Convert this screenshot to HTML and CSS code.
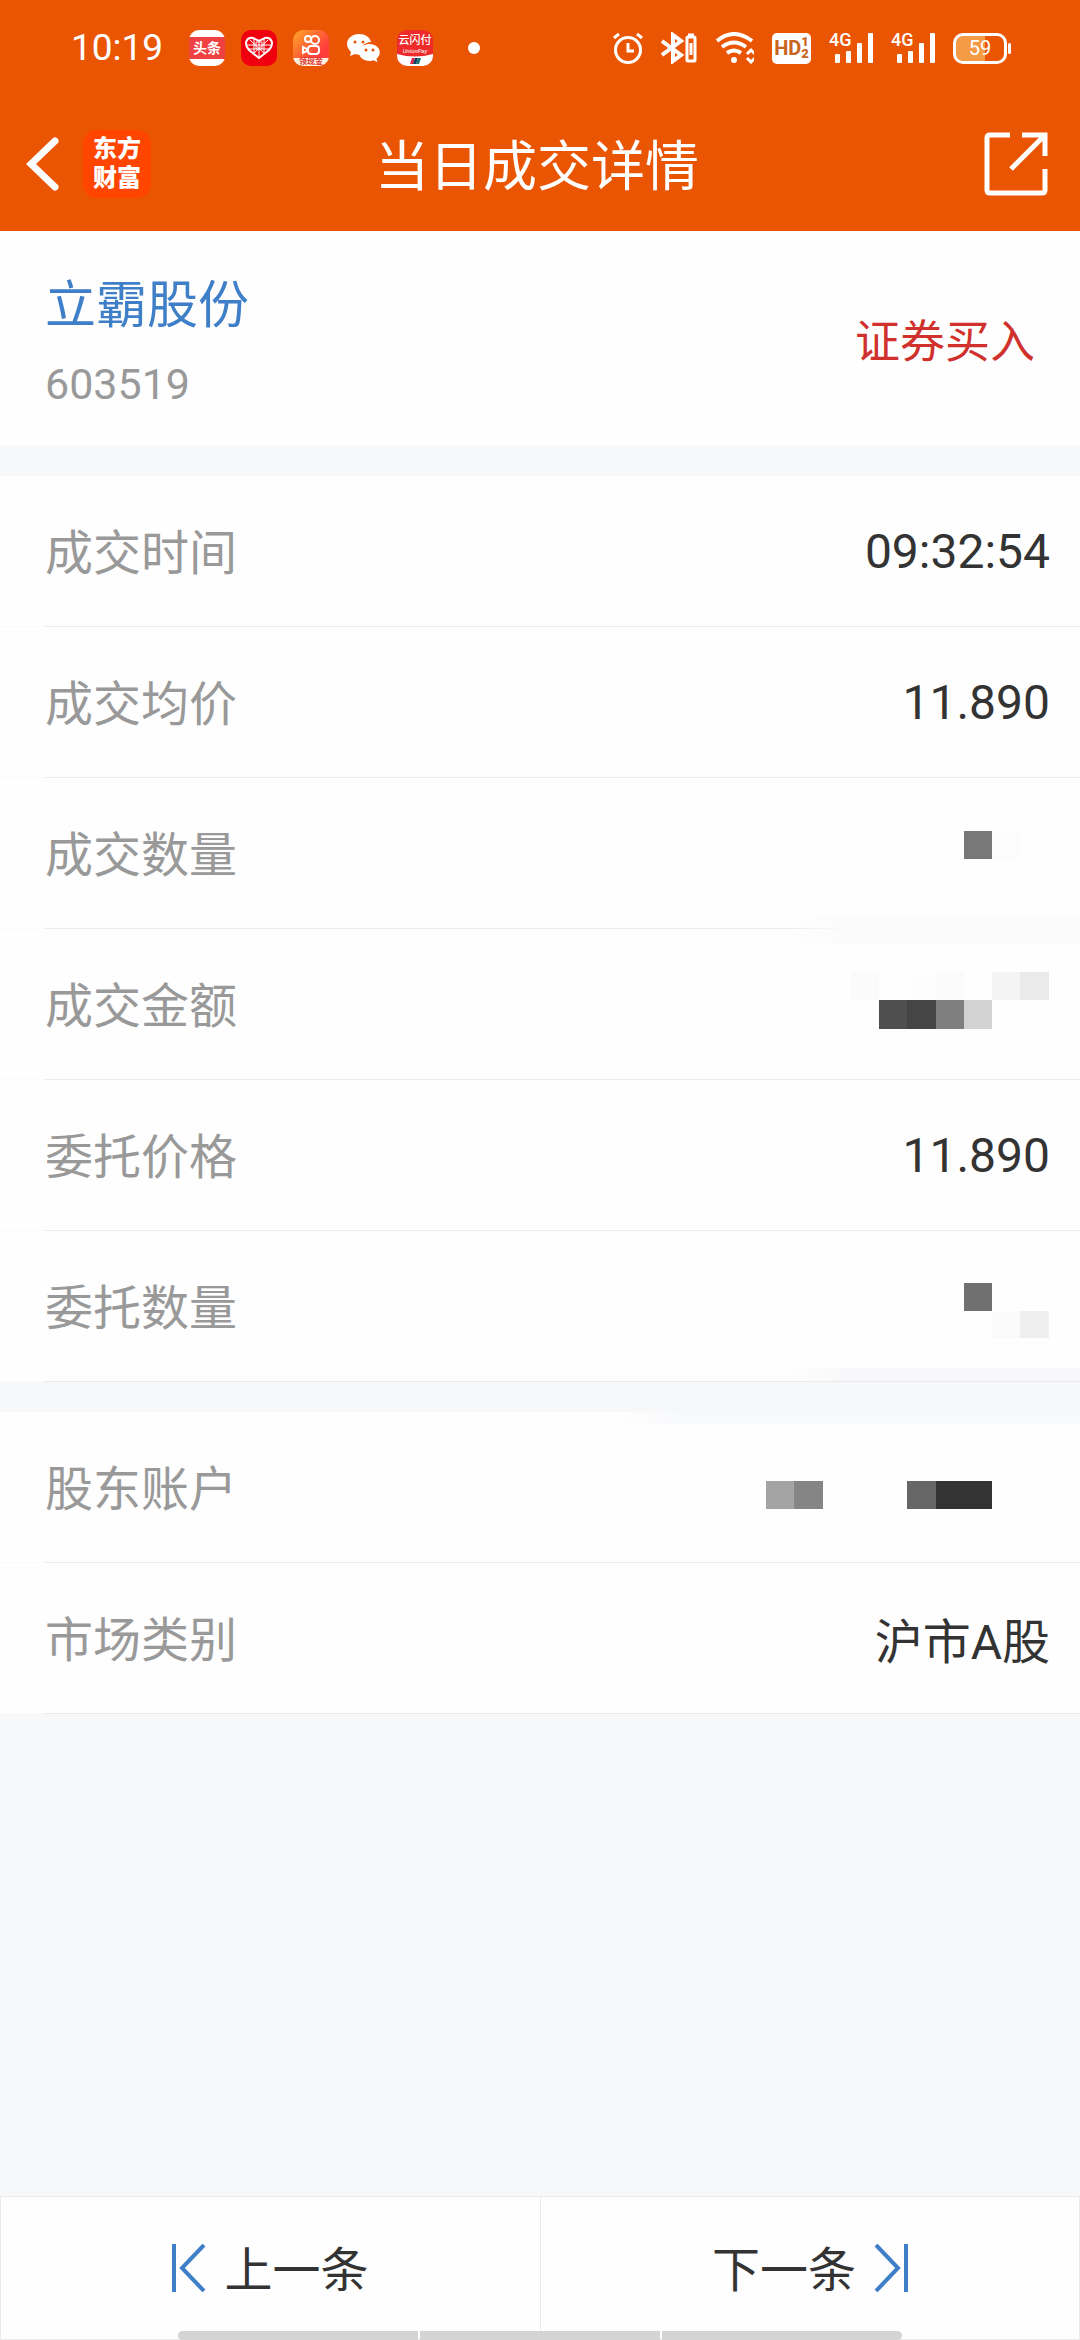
FILE: index.html
```html
<!DOCTYPE html>
<html lang="zh-CN">
<head>
<meta charset="utf-8">
<meta name="viewport" content="width=device-width, initial-scale=1">
<title>当日成交详情</title>
<link rel="stylesheet" href="styles.css">
</head>
<body>
<div class="app">
  <div class="status">
    <time class="clock">10:19</time>
    <div class="notices">
      <span class="chip chip-news"><b>头条</b></span>
      <span class="chip chip-heart">
        <svg width="36" height="36" viewBox="0 0 36 36" fill="none" stroke="#fff" stroke-width="2">
          <path d="M18 28 8 20C2 13 6 7 12 8l6 3 6-3c6-1 10 5 4 12z"/>
          <path d="M9 10l15 14M27 10 12 24M13 8v15M23 8v15M6 15h24M18 11v16M7 19h22M15 12h6v7h-6z" stroke-width="1"/>
        </svg>
      </span>
      <span class="chip chip-video">
        <svg width="36" height="28" viewBox="0 0 36 28" fill="none" stroke="#fff" stroke-width="2">
          <circle cx="15" cy="9" r="3"/><circle cx="22" cy="10" r="4"/>
          <rect x="15" y="16" width="11" height="8" rx="3"/><path d="M10 17v6l4-2v-2z"/>
        </svg>
        <b>领现金</b>
      </span>
      <svg width="36" height="36" viewBox="0 0 36 36">
        <path fill="#fff" d="M14 4C7 4 2 8.500 2 14c0 3 2 6 4 8l-1 4 5-2c2 .6 4 .8 6 .6C14 17 20 12 26 12 25 7 20 4 14 4z"/>
        <path fill="#fff" d="M24.500 14C18 14 14 18 14 22.500S18.500 31 24.500 31c1.500 0 3-.3 4-.7l4 1.700-1-3.500c2-1.500 3.300-3.600 3.300-6C34.800 18 30.500 14 24.500 14z"/>
        <g fill="#ea5504"><circle cx="10" cy="12" r="1.500"/><circle cx="18" cy="12" r="1.500"/><circle cx="21" cy="20" r="1.500"/><circle cx="28" cy="20" r="1.500"/></g>
      </svg>
      <span class="chip chip-pay">
        <b>云闪付</b><i>UnionPay</i>
        <svg width="36" height="12" viewBox="0 0 36 12"><path fill="#fff" d="M0 0q18 5 36 0v12H0z"/><path fill="#d7274b" d="M15 4h3l-2 6h-3z"/><path fill="#123a63" d="M18 4h3l-2 6h-3z"/><path fill="#14786f" d="M21 4h3l-2 6h-3z"/></svg>
      </span>
      <span class="dot"></span>
    </div>
    <div class="signals">
      <svg width="30" height="32" viewBox="0 0 30 32" fill="none" stroke="#fff" stroke-width="3">
        <circle cx="15" cy="18" r="12.500"/><path d="M15 11v8h6"/><path d="M1 6l5-4M24 2l5 4"/>
      </svg>
      <svg width="37" height="32" viewBox="0 0 37 32" fill="none" stroke="#fff">
        <path stroke-width="4" d="M1 9l19 14-8 6V3l8 6L1 23"/>
        <rect x="26" y="5" width="8" height="24" rx="1" stroke-width="3"/><path stroke-width="3" d="M27 3h6M30 11v12"/>
      </svg>
      <svg width="38" height="32" viewBox="0 0 38 32" fill="none" stroke="#fff" stroke-width="4">
        <path d="M1 9Q18-5 36 9M6 15q12-9 24 0M11 21q7-5 14 0"/><circle cx="18" cy="28" r="3" fill="#fff" stroke="none"/>
        <path stroke-width="3" d="M31 22l4-4 4 4M31 26l4 4 4-4"/>
      </svg>
      <span class="hd"><b>HD</b><span>1<br>2</span></span>
      <span class="cell"><span>4G</span>
        <svg width="44" height="32" viewBox="0 0 44 32" fill="#fff"><rect x="6" y="22" width="5" height="9" rx="1"/><rect x="17" y="19" width="5" height="12" rx="1"/><rect x="28" y="11" width="5" height="20" rx="1"/><rect x="39" y="1" width="5" height="30" rx="1"/></svg>
      </span>
      <span class="cell"><span>4G</span>
        <svg width="44" height="32" viewBox="0 0 44 32" fill="#fff"><rect x="6" y="22" width="5" height="9" rx="1"/><rect x="17" y="19" width="5" height="12" rx="1"/><rect x="28" y="11" width="5" height="20" rx="1"/><rect x="39" y="1" width="5" height="30" rx="1"/></svg>
      </span>
      <span class="battery">59</span>
    </div>
  </div>

  <header class="bar">
    <div class="bar-left">
      <button class="icon-btn" type="button" aria-label="返回">
        <svg width="34" height="58" viewBox="0 0 34 58" fill="none" stroke="#fff" stroke-width="7" stroke-linecap="round"><path d="M29 6 5 29l24 23"/></svg>
      </button>
      <span class="logo">东方<br>财富</span>
    </div>
    <h1 class="title">当日成交详情</h1>
    <button class="icon-btn share" type="button" aria-label="分享">
      <svg width="64" height="64" viewBox="0 0 64 64" fill="none" stroke="#fff" stroke-width="5">
        <path d="M26 3H6q-3 0-3 3v52q0 3 3 3h52q3 0 3-3V37"/><path d="M38 3h23v21M60 4 27 37"/>
      </svg>
    </button>
  </header>

  <main>
    <section class="card summary">
      <div class="stock">
        <a class="name" href="#stock">立霸股份</a>
        <div class="code">603519</div>
      </div>
      <div class="side">证券买入</div>
    </section>

    <dl class="card">
      <div class="row"><dt>成交时间</dt><dd>09:32:54</dd></div>
      <div class="row"><dt>成交均价</dt><dd>11.890</dd></div>
      <div class="row smudge-line"><dt>成交数量</dt><dd>
        <svg width="284" height="64"><path fill="#787878" d="M198 10h28v28h-28z"/><path fill="#fcfcfc" d="M226 10h28v28h-28z"/></svg></dd></div>
      <div class="row"><dt>成交金额</dt><dd>
        <svg width="284" height="64">
          <path fill="#fbfbfb" d="M85 0h28v28H85zM170 0h28v28h-28z"/><path fill="#fdfdfd" d="M141 0h29v28h-29z"/><path fill="#f4f4f4" d="M226 0h28v28h-28z"/><path fill="#eaeaea" d="M254 0h29v28h-29z"/>
          <path fill="#4f4f4f" d="M113 28h28v29h-28z"/><path fill="#454545" d="M141 28h29v29h-29z"/><path fill="#7f7f7f" d="M170 28h28v29h-28z"/><path fill="#d2d2d2" d="M198 28h28v29h-28z"/>
        </svg></dd></div>
      <div class="row"><dt>委托价格</dt><dd>11.890</dd></div>
      <div class="row smudge-end"><dt>委托数量</dt><dd>
        <svg width="284" height="64"><path fill="#707070" d="M198 9h28v28h-28z"/><path fill="#fbfbfb" d="M226 37h28v29h-28z"/><path fill="#efefef" d="M254 37h29v29h-29z"/></svg></dd></div>
    </dl>

    <dl class="card">
      <div class="row smudge-start"><dt>股东账户</dt><dd>
        <svg width="284" height="64"><path fill="#a4a4a4" d="M0 26h28v28H0z"/><path fill="#858585" d="M28 26h29v28H28z"/><path fill="#666" d="M141 26h29v28h-29z"/><path fill="#333" d="M170 26h56v28h-56z"/></svg></dd></div>
      <div class="row"><dt>市场类别</dt><dd>沪市A股</dd></div>
    </dl>
  </main>

  <nav class="pager">
    <button type="button">
      <svg width="34" height="48" viewBox="0 0 34 48" fill="none" stroke="#3f7fc8" stroke-width="4"><path d="M2 0v48M32 1 10 24l22 23"/></svg>
      <span>上一条</span>
    </button>
    <button type="button">
      <span>下一条</span>
      <svg width="34" height="48" viewBox="0 0 34 48" fill="none" stroke="#3f7fc8" stroke-width="4"><path d="M32 0v48M2 1l22 23L2 47"/></svg>
    </button>
  </nav>
  <div class="gesture"><span></span><span></span><span></span></div>
</div>
</body>
</html>
```
FILE: styles.css
```css
* { box-sizing: border-box; }

body {
  margin: 0;
  background: #f7f8fa;
  color: #333;
  font-family: Roboto, "Noto Sans CJK SC", sans-serif;
  font-size: 48px;
}

svg { display: block; }

button {
  font: inherit;
  color: inherit;
  background: none;
  border: 0;
  padding: 0;
}

.app {
  position: relative;
  display: flex;
  flex-direction: column;
  min-height: 100vh;
}

main { flex: 1; }

/* phone status bar */
.status {
  display: flex;
  align-items: center;
  height: 96px;
  padding: 0 69px 0 71px;
  background: #ea5504;
  color: #fff;
}

.clock {
  width: 118px;
  font-size: 37px;
  line-height: 40px;
}

.notices {
  display: flex;
  align-items: center;
  gap: 16px;
}

.chip {
  display: flex;
  flex-direction: column;
  align-items: center;
  width: 36px;
  height: 36px;
  border-radius: 10px;
  overflow: hidden;
  white-space: nowrap;
}

.chip-news {
  justify-content: center;
  background: linear-gradient(#fff 7px, #f04142 7px, #f04142 29px, #fff 29px);
  font-size: 14px;
  line-height: 20px;
}

.chip-heart { background: #f0000f; }

.chip-video {
  background: linear-gradient(135deg, #ffa726, #ff3d3d 70%);
}

.chip-video b {
  align-self: stretch;
  background: #fff3e0;
  color: #d33;
  font-size: 8px;
  line-height: 8px;
  text-align: center;
}

.chip-pay {
  justify-content: space-between;
  background: #ee2a2a;
}

.chip-pay b {
  padding-top: 4px;
  font-size: 11px;
  font-weight: 500;
  line-height: 14px;
}

.chip-pay i {
  font-size: 6px;
  line-height: 6px;
}

.dot {
  width: 12px;
  height: 12px;
  margin-left: 19px;
  border-radius: 50%;
  background: #fff;
}

.signals {
  display: flex;
  align-items: center;
  gap: 18px;
  margin-left: auto;
}

.hd {
  display: flex;
  align-items: center;
  justify-content: center;
  width: 39px;
  height: 31px;
  border-radius: 5px;
  background: #fff;
  color: #c8641e;
  font-size: 20px;
}

.hd span {
  font-size: 13px;
  font-weight: 900;
  line-height: 12px;
}

.cell { position: relative; }

.cell span {
  position: absolute;
  top: 0;
  left: 0;
  font-size: 18px;
  font-weight: 500;
  line-height: 16px;
}

.battery {
  position: relative;
  width: 54px;
  height: 31px;
  margin-right: 4px;
  border: 3px solid #fff;
  border-radius: 10px;
  background: linear-gradient(90deg, #f59a45 60%, transparent 60%);
  font-size: 20px;
  line-height: 25px;
  text-align: center;
}

.battery::after {
  content: "";
  position: absolute;
  top: 7px;
  right: -7px;
  width: 3px;
  height: 11px;
  border-radius: 2px;
  background: #fff;
}

/* title bar */
.bar {
  display: grid;
  grid-template-columns: 1fr auto 1fr;
  align-items: center;
  height: 135px;
  padding: 0 32px 0 26px;
  background: #ea5504;
  color: #fff;
}

.bar-left {
  display: flex;
  align-items: center;
  gap: 23px;
}

.logo {
  width: 68px;
  height: 68px;
  padding-top: 5px;
  border-radius: 14px;
  background: #ff4500;
  font-size: 24px;
  font-weight: 900;
  line-height: 29px;
  text-align: center;
}

.title {
  margin: 0;
  padding-top: 8px;
  font-size: 54px;
  font-weight: 400;
  line-height: 80px;
}

.share { justify-self: end; }

/* cards */
.card {
  margin: 0 0 30px;
  background: #fefefe;
}

.summary {
  display: flex;
  align-items: center;
  justify-content: space-between;
  height: 215px;
  padding: 0 45px;
}

.stock { padding-top: 10px; }

.name {
  color: #3f7fc8;
  font-size: 51px;
  line-height: 80px;
  text-decoration: none;
}

.code {
  color: #999;
  font-size: 43px;
  line-height: 76px;
}

.side {
  color: #d0312d;
  font-size: 45px;
}

.row {
  position: relative;
  display: flex;
  align-items: center;
  justify-content: space-between;
  height: 151px;
  padding: 0 30px 1px 45px;
  background: linear-gradient(90deg, #fafafa 45px, #ebebeb 45px) bottom / 100% 1px no-repeat;
}

dt {
  padding-bottom: 4px;
  color: #999;
}

dd { margin: 0; }

/* faint traces left by the redaction brush */
.smudge-line::after,
.smudge-end::after,
.smudge-start::after {
  content: "";
  position: absolute;
  right: 0;
  width: 27%;
  height: 28px;
  background: linear-gradient(90deg, transparent, #fbfbfb 20%);
}

.smudge-line::after {
  z-index: 1;
  bottom: -15px;
}

.smudge-end::after {
  bottom: 1px;
  height: 13px;
  background: linear-gradient(90deg, transparent, #f8f8fa 20%);
}

.smudge-start::after {
  top: 0;
  width: 43%;
  height: 12px;
  background: linear-gradient(90deg, transparent, #f8f9fb 15%);
}

/* previous / next */
.pager {
  display: grid;
  grid-template-columns: 1fr 1fr;
  height: 144px;
  border: 1px solid #e8e9eb;
  background: #fefefe;
}

.pager button {
  display: flex;
  align-items: center;
  justify-content: center;
  gap: 18px;
}

.pager button + button { border-left: 1px solid #e8e9eb; }

.pager span { padding-bottom: 4px; }

.gesture {
  position: absolute;
  bottom: 0;
  left: 16.5%;
  display: flex;
  gap: 2px;
  width: 67%;
  height: 9px;
  border-radius: 5px;
  overflow: hidden;
}

.gesture span {
  flex: 1;
  background: #d4d4d4;
}
```
